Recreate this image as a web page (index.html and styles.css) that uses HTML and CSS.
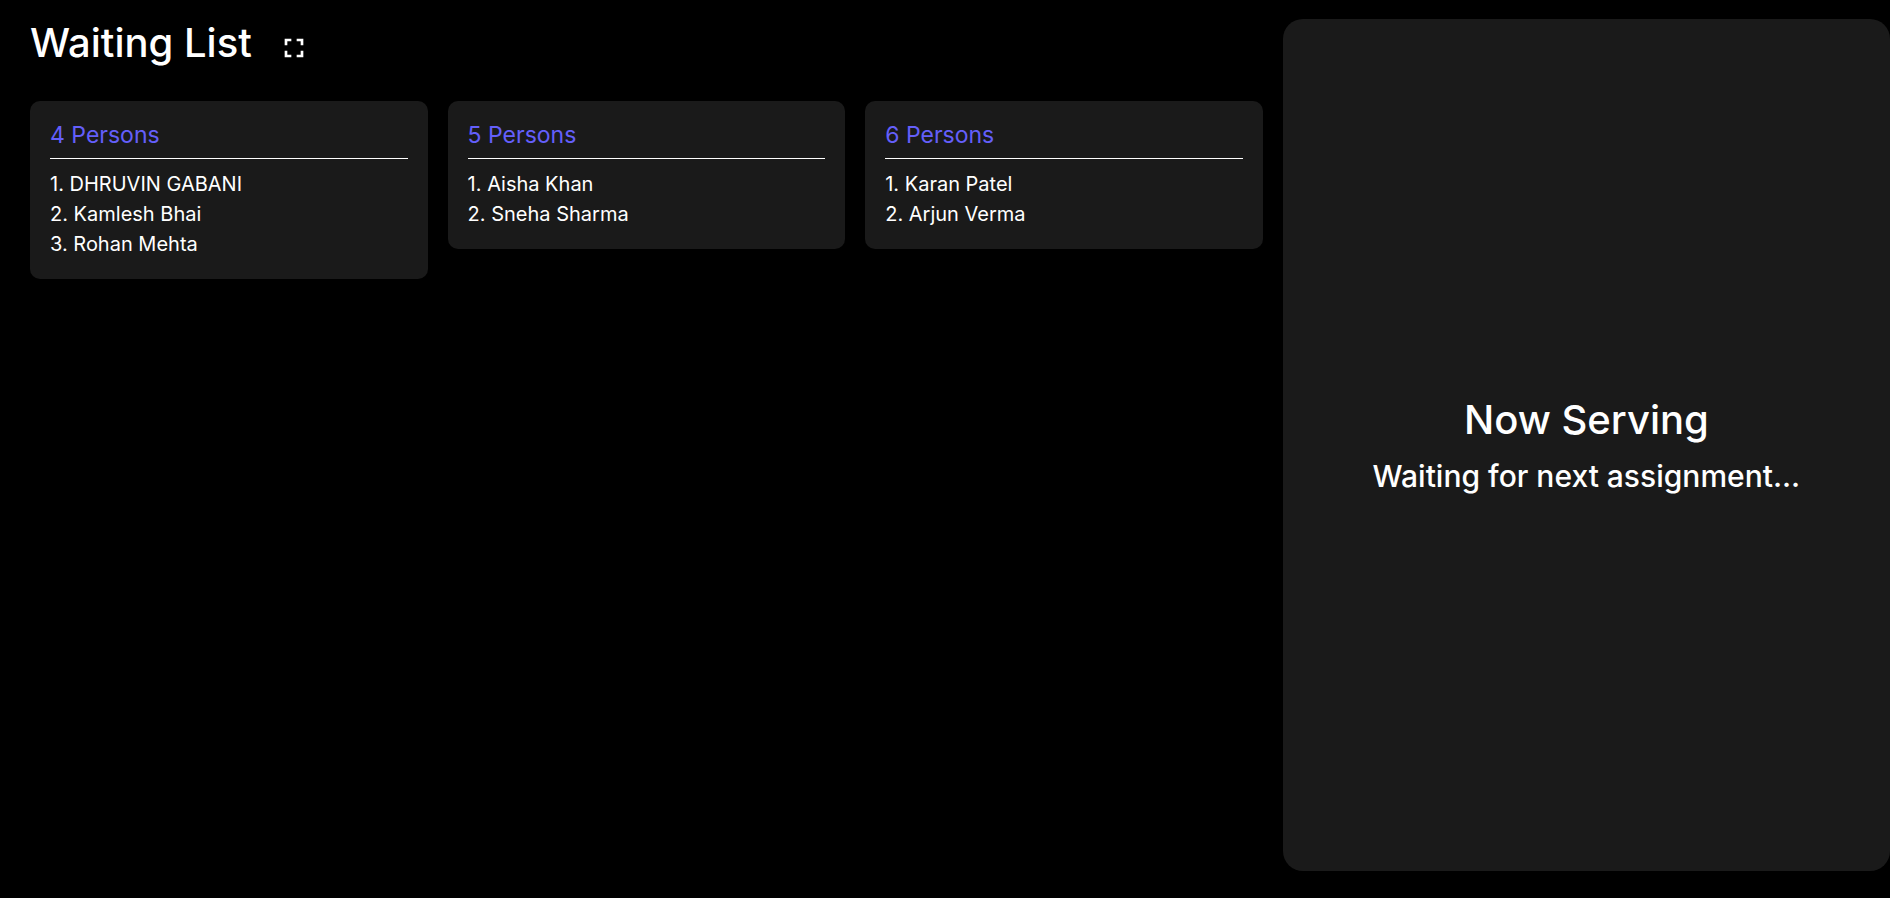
FILE: index.html
```
<!DOCTYPE html>
<html lang="en">
<head>
    <meta charset="UTF-8">
    <meta name="viewport" content="width=device-width, initial-scale=1.0">
    <title>Waiting List</title>
    <link rel="stylesheet" href="styles.css">
</head>
<body>
    <div class="container">
        <main class="waiting">
            <div class="header">
                <h1>Waiting List</h1>
                <button type="button" class="fullscreen-btn" id="fullscreenBtn" aria-label="Fullscreen">
                    <svg viewBox="0 0 24 24" width="32" height="32" fill="currentColor">
                        <path d="M7 14H5v5h5v-2H7v-3zm-2-4h2V7h3V5H5v5zm12 7h-3v2h5v-5h-2v3zM14 5v2h3v3h2V5h-5z"/>
                    </svg>
                </button>
            </div>

            <div class="cards">
                <section class="card">
                    <h2>4 Persons</h2>
                    <ol>
                        <li>DHRUVIN GABANI</li>
                        <li>Kamlesh Bhai</li>
                        <li>Rohan Mehta</li>
                    </ol>
                </section>
                <section class="card">
                    <h2>5 Persons</h2>
                    <ol>
                        <li>Aisha Khan</li>
                        <li>Sneha Sharma</li>
                    </ol>
                </section>
                <section class="card">
                    <h2>6 Persons</h2>
                    <ol>
                        <li>Karan Patel</li>
                        <li>Arjun Verma</li>
                    </ol>
                </section>
            </div>
        </main>

        <aside class="serving">
            <h2>Now Serving</h2>
            <p>Waiting for next assignment...</p>
        </aside>
    </div>

    <script>
        document.getElementById('fullscreenBtn').addEventListener('click', function() {
            if (document.fullscreenElement) {
                document.exitFullscreen();
            } else {
                document.documentElement.requestFullscreen();
            }
        });
    </script>
</body>
</html>
```
FILE: styles.css
```
* {
    box-sizing: border-box;
    margin: 0;
    padding: 0;
}
body {
    background-color: #000;
    color: #fff;
    font-family: Inter, 'Segoe UI', Roboto, sans-serif;
}
.container {
    display: grid;
    grid-template-columns: 67fr 33fr;
    gap: 20px;
    min-height: 100vh;
    padding: 19px 0 27px 30px;
}

/* Waiting list */
.header {
    display: flex;
    align-items: flex-end;
    gap: 26px;
    margin-bottom: 34px;
}
h1 {
    font-size: 40px;
    font-weight: 500;
    line-height: 48px;
}
.fullscreen-btn {
    display: flex;
    padding: 0 0 3px;
    background: none;
    border: none;
    color: #fff;
    cursor: pointer;
}
.cards {
    display: grid;
    grid-template-columns: repeat(3, 1fr);
    align-items: start;
    gap: 20px;
}
.card {
    padding: 20px;
    background-color: #1a1a1a;
    border-radius: 10px;
}
.card h2 {
    margin-bottom: 10px;
    padding-bottom: 9px;
    border-bottom: 1px solid #fff;
    color: #645ffa;
    font-size: 23px;
    font-weight: 400;
    line-height: 28px;
}
.card ol {
    counter-reset: person;
}
.card li {
    list-style: none;
    counter-increment: person;
    font-size: 20px;
    line-height: 30px;
}
.card li::before {
    content: counter(person) ". ";
}

/* Now serving */
.serving {
    display: flex;
    flex-direction: column;
    align-items: center;
    justify-content: center;
    gap: 13px;
    background-color: #1a1a1a;
    border-radius: 20px;
    text-align: center;
}
.serving h2 {
    font-size: 40px;
    font-weight: 500;
    line-height: 48px;
}
.serving p {
    font-size: 30px;
    font-weight: 500;
    line-height: 38px;
}
```
